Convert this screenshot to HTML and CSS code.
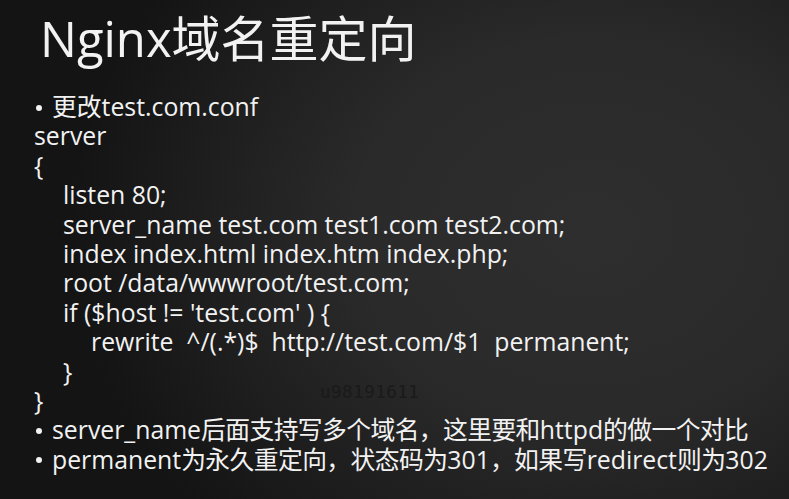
FILE: index.html
```html
<!DOCTYPE html>
<html>
<head>
<meta charset="utf-8">
<link rel="stylesheet" href="styles.css">
</head>
<body>
<div class="slide">
  <h1 class="title">Nginx域名重定向</h1>
  <div class="content">
    <div class="line bullet"><span>更改test.com.conf</span></div>
    <div class="line">server</div>
    <div class="line">{</div>
    <div class="line i1">listen 80;</div>
    <div class="line i1">server_name test.com test1.com test2.com;</div>
    <div class="line i1">index index.html index.htm index.php;</div>
    <div class="line i1">root /data/wwwroot/test.com;</div>
    <div class="line i1">if ($host != 'test.com' ) {</div>
    <div class="line i2">rewrite&nbsp; ^/(.*)$&nbsp; http://test.com/$1&nbsp; permanent;</div>
    <div class="line i1">}</div>
    <div class="line">}</div>
    <div class="line bullet"><span>server_name<span class="cjk">后面支持写多个域名，这里要和</span>httpd<span class="cjk">的做一个对比</span></span></div>
    <div class="line bullet"><span>permanent<span class="cjk">为永久重定向，状态码为</span>301<span class="cjk">，如果写</span>redirect<span class="cjk">则为</span>302</span></div>
  </div>
  <div class="watermark">u98191611</div>
</div>
</body>
</html>
```
FILE: styles.css
```css
html, body {
  margin: 0;
  padding: 0;
  width: 789px;
  height: 499px;
  overflow: hidden;
}
body {
  background: radial-gradient(ellipse 520px 420px at 590px 230px, #2e2e2e 0%, #2a2a2a 45%, #1c1c1c 80%, #141414 100%);
  background-color: #141414;
  color: #f2f2f2;
  font-family: "Open Sans", "Noto Sans CJK SC", sans-serif;
}
.slide {
  position: relative;
  width: 789px;
  height: 499px;
  padding: 8px 0 0 34px;
  box-sizing: border-box;
}
.title {
  margin: 0 0 0 6px;
  font-weight: normal;
  font-size: 49px;
  line-height: 60px;
  height: 84px;
  letter-spacing: 0;
}
.content {
  font-size: 24.8px;
}
.line {
  height: 29.4px;
  line-height: 29.4px;
  white-space: nowrap;
  overflow: visible;
}
.i1 { padding-left: 29px; }
.i2 { padding-left: 57px; }
.cjk { letter-spacing: -0.6px; }
.bullet {
  display: flex;
  align-items: center;
}
.bullet::before {
  content: "";
  width: 6px;
  height: 6px;
  border-radius: 50%;
  background: #f2f2f2;
  margin: 2px 10px 0 2px;
  flex: none;
}
.watermark {
  position: absolute;
  left: 320px;
  top: 382px;
  font-family: "DejaVu Sans Mono", monospace;
  font-size: 17.5px;
  color: #1a1a1a;
  letter-spacing: 0.5px;
}
```
